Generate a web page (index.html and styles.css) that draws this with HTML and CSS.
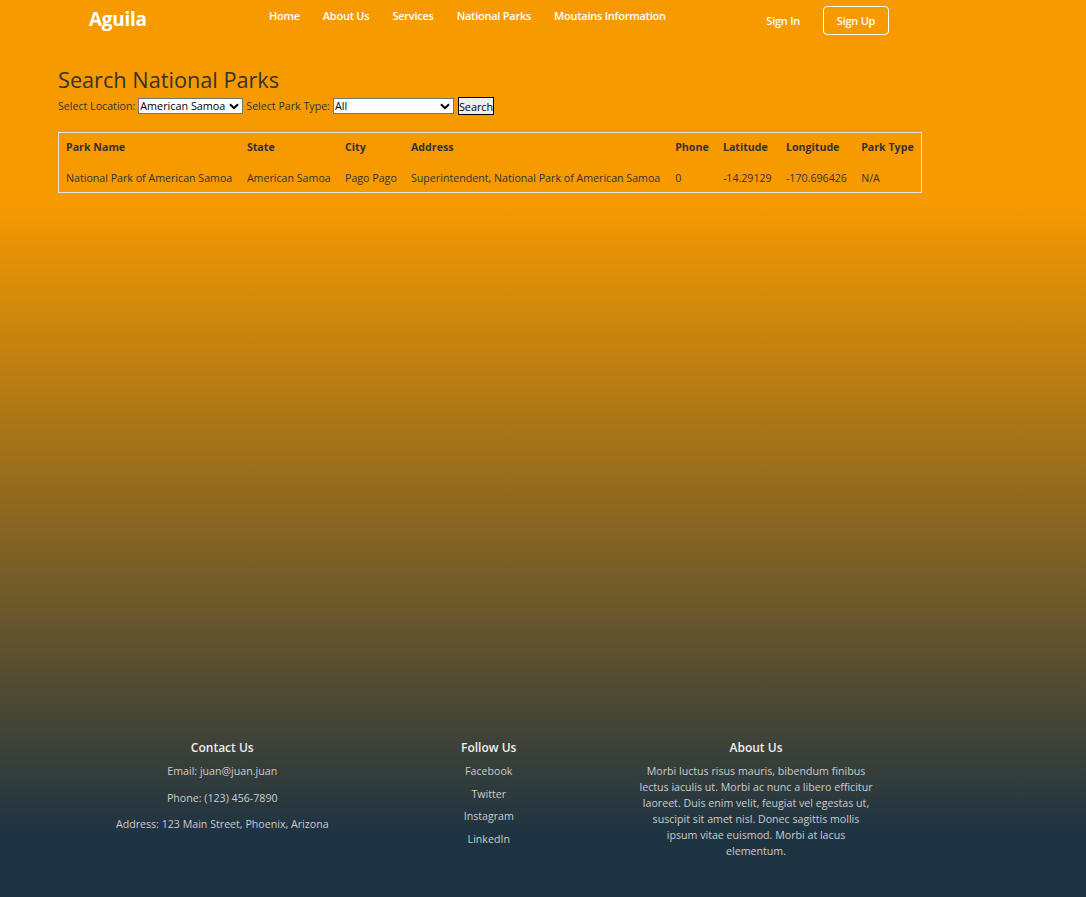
FILE: index.html
```html
<!DOCTYPE html>
<html lang="en">
<head>
<meta charset="utf-8">
<title>Aguila - Search National Parks</title>
<link rel="stylesheet" href="styles.css">
</head>
<body>
<header class="site-header">
  <div class="logo">Aguila</div>
  <nav class="nav">
    <a href="#">Home</a>
    <a href="#">About Us</a>
    <a href="#">Services</a>
    <a href="#">National Parks</a>
    <a href="#">Moutains Information</a>
  </nav>
  <div class="auth">
    <a href="#" class="signin">Sign In</a>
    <a href="#" class="signup">Sign Up</a>
  </div>
</header>

<main class="content">
  <h1 class="title">Search National Parks</h1>
  <form class="search-form">
    <label for="loc">Select Location:</label>
    <span class="select-wrap sel-loc">
      <select id="loc"><option>American Samoa</option></select>
      <svg class="chev" viewBox="0 0 10 7" width="10" height="7" aria-hidden="true"><path d="M1 1.2 L5 5.2 L9 1.2" fill="none" stroke="#000" stroke-width="2"/></svg>
    </span>
    <label for="type">Select Park Type:</label>
    <span class="select-wrap sel-type">
      <select id="type"><option>All</option></select>
      <svg class="chev" viewBox="0 0 10 7" width="10" height="7" aria-hidden="true"><path d="M1 1.2 L5 5.2 L9 1.2" fill="none" stroke="#000" stroke-width="2"/></svg>
    </span>
    <button type="button" class="btn-search">Search</button>
  </form>

  <table class="parks">
    <thead>
      <tr>
        <th>Park Name</th><th>State</th><th>City</th><th>Address</th><th>Phone</th><th>Latitude</th><th>Longitude</th><th>Park Type</th>
      </tr>
    </thead>
    <tbody>
      <tr>
        <td>National Park of American Samoa</td><td>American Samoa</td><td>Pago Pago</td><td>Superintendent, National Park of American Samoa</td><td>0</td><td>-14.29129</td><td>-170.696426</td><td>N/A</td>
      </tr>
    </tbody>
  </table>
</main>

<footer class="site-footer">
  <div class="fcol">
    <h3>Contact Us</h3>
    <p class="contact">Email: juan@juan.juan</p>
    <p class="contact">Phone: (123) 456-7890</p>
    <p class="contact">Address: 123 Main Street, Phoenix, Arizona</p>
  </div>
  <div class="fcol">
    <h3>Follow Us</h3>
    <ul class="social">
      <li><a href="#">Facebook</a></li>
      <li><a href="#">Twitter</a></li>
      <li><a href="#">Instagram</a></li>
      <li><a href="#">LinkedIn</a></li>
    </ul>
  </div>
  <div class="fcol">
    <h3>About Us</h3>
    <p class="about">Morbi luctus risus mauris, bibendum finibus lectus iaculis ut. Morbi ac nunc a libero efficitur laoreet. Duis enim velit, feugiat vel egestas ut, suscipit sit amet nisl. Donec sagittis mollis ipsum vitae euismod. Morbi at lacus elementum.</p>
  </div>
</footer>
</body>
</html>
```
FILE: styles.css
```css
html, body {
  margin: 0;
  padding: 0;
}
body {
  min-height: 100vh;
  display: flex;
  flex-direction: column;
  font-family: "Open Sans", "Noto Sans", sans-serif;
  font-size: 10.65px;
  color: #333;
  background: linear-gradient(180deg, #f79a00 0px, #f79a00 200px, #1e3342 835px, #1e3342 100%);
}

.site-header {
  display: flex;
  align-items: flex-start;
  width: 800px;
  margin-left: 89px;
  height: 44px;
}
.logo {
  width: 180px;
  color: #fff;
  font-size: 19px;
  font-weight: 700;
  line-height: 20px;
  padding-top: 9px;
  letter-spacing: -0.3px;
}
.nav {
  flex: 1;
  display: flex;
  gap: 23px;
  padding-top: 8px;
}
.nav a {
  color: #fff;
  font-weight: 600;
  font-size: 11px;
  line-height: 16px;
  text-decoration: none;
  letter-spacing: -0.25px;
}
.auth {
  display: flex;
  align-items: center;
  gap: 23px;
  padding-top: 6px;
}
.auth a {
  color: #fff;
  text-decoration: none;
  font-size: 11px;
  font-weight: 600;
  letter-spacing: -0.25px;
}
.signup {
  border: 1px solid #fff;
  border-radius: 4px;
  height: 27px;
  width: 64px;
  display: flex;
  align-items: center;
  justify-content: center;
}

.content {
  flex: 1;
  padding: 0 0 0 58px;
}
.title {
  margin: 21px 0 0;
  font-size: 21.7px;
  font-weight: 400;
  line-height: 30px;
  color: #333;
}
.search-form {
  display: flex;
  align-items: center;
  gap: 3px;
  margin-top: 1px;
  height: 20px;
}
.search-form label {
  color: #333;
}
.select-wrap {
  position: relative;
  display: inline-block;
  height: 16px;
}
.select-wrap select {
  appearance: none;
  -webkit-appearance: none;
  display: block;
  width: 100%;
  height: 16px;
  box-sizing: border-box;
  font-family: "Open Sans", sans-serif;
  font-size: 10.8px;
  line-height: 14px;
  padding: 0 0 0 1px;
  border: 1px solid #767676;
  border-radius: 0;
  background: #fff;
  color: #000;
}
.chev {
  position: absolute;
  right: 4px;
  top: 5px;
  pointer-events: none;
}
.sel-loc { width: 105px; }
.sel-type { width: 121px; }
.btn-search {
  margin-left: 1px;
  font-family: "Open Sans", sans-serif;
  font-size: 10.8px;
  height: 18px;
  width: 36px;
  padding: 0;
  border: 1px solid #000;
  border-radius: 0;
  background: #efefef;
  color: #000;
}

.parks {
  margin-top: 16px;
  border: 1px solid #e6e6e6;
  border-collapse: separate;
  border-spacing: 0;
  width: 864px;
}
.parks th, .parks td {
  text-align: left;
  height: 28px;
  white-space: nowrap;
  color: #333;
}
.parks th {
  font-weight: 700;
  padding: 0 7px 1px;
}
.parks td {
  font-weight: 400;
  padding: 2px 7px 0;
}

.site-footer {
  display: flex;
  width: 801px;
  margin-left: 89px;
  padding-bottom: 38px;
}
.fcol {
  flex: 1;
  text-align: center;
  padding: 0 16px;
}
.fcol h3 {
  margin: 0 0 6px;
  font-size: 12px;
  font-weight: 600;
  line-height: 18px;
  color: #eee;
}
.contact {
  margin: 0 0 10.5px;
  line-height: 16px;
  color: #ccc;
}
.social {
  list-style: none;
  margin: 0;
  padding: 0;
}
.social li {
  line-height: 16px;
  margin-bottom: 6.7px;
}
.social a {
  color: #ccc;
  text-decoration: none;
}
.about {
  margin: 0 auto;
  width: 236px;
  line-height: 16px;
  color: #ccc;
}
```
